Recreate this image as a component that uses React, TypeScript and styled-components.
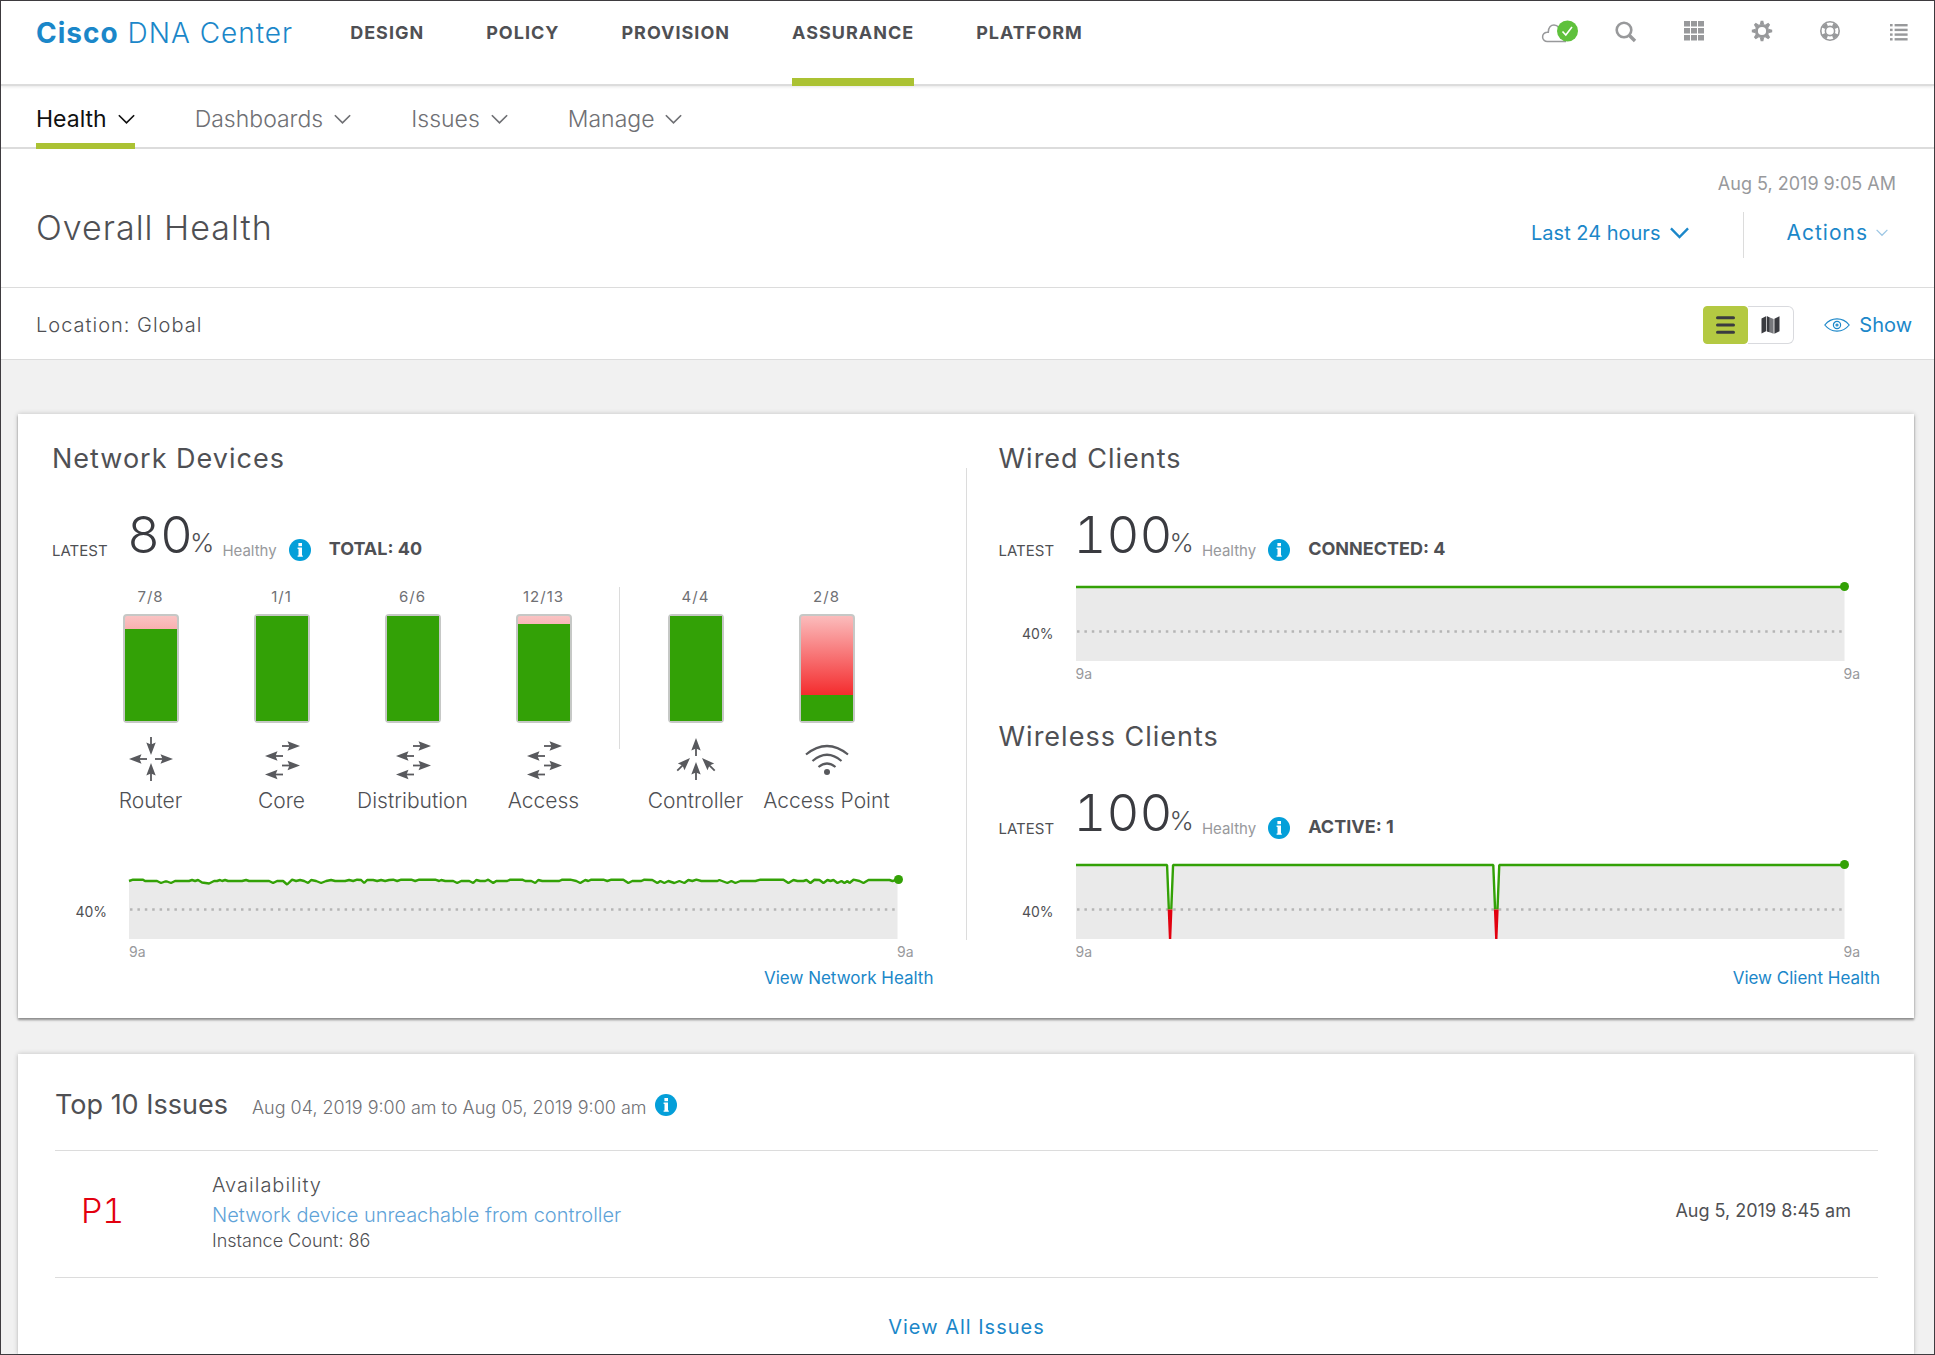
import React from 'react';
import styled, { createGlobalStyle } from 'styled-components';

const color = {
  ink: '#4f5054',
  dark: '#3a3b40',
  muted: '#6f7074',
  faint: '#98999c',
  blue: '#1b87c9',
  lightBlue: '#5fa3d8',
  info: '#049fd9',
  lime: '#abc233',
  green: '#33a106',
  red: '#e2000f',
  rule: '#dcdcdc',
  page: '#f1f1f1',
};

const GlobalStyle = createGlobalStyle`
  *, *::before, *::after { box-sizing: border-box; }
  body {
    margin: 0;
    font-family: Inter, "Liberation Sans", sans-serif;
    color: ${color.ink};
    background: ${color.page};
  }
  h1, h2, p, ul { margin: 0; padding: 0; font-weight: 400; }
  ul { list-style: none; }
  a { text-decoration: none; color: inherit; }
  button { border: 0; padding: 0; background: none; font: inherit; color: inherit; cursor: pointer; }
  svg { display: block; overflow: visible; flex: none; }
`;

/* ---------- page frame ---------- */

const Page = styled.div`
  display: flex;
  flex-direction: column;
  min-height: 100vh;
  border: 1px solid #3f3c40;
`;

const Header = styled.header`
  display: flex;
  align-items: stretch;
  height: 85px;
  padding: 0 26px 0 35px;
  background: #fff;
  border-bottom: 2px solid ${color.rule};
  box-shadow: 0 1px 3px rgba(0, 0, 0, 0.1);
  position: relative;
`;

const Brand = styled.a`
  margin-right: 57px;
  padding-top: 16px;
  font-size: 28px;
  line-height: 32px;
  font-weight: 300;
  letter-spacing: 1px;
  white-space: nowrap;
  color: ${color.blue};
  strong { font-weight: 700; }
`;

const MainNav = styled.nav`
  display: flex;
  gap: 62px;
  margin-bottom: -2px;
`;

const MainNavLink = styled.a<{ $active?: boolean }>`
  padding-top: 20px;
  font-size: 18px;
  line-height: 24px;
  font-weight: 700;
  letter-spacing: 1px;
  border-bottom: 8px solid ${(p) => (p.$active ? color.lime : 'transparent')};
`;

const Tools = styled.div`
  display: flex;
  gap: 48px;
  margin-left: auto;
  padding-top: 18px;
`;

const ToolButton = styled.button`
  display: flex;
  align-items: center;
  justify-content: center;
  height: 24px;
  color: #98999b;
`;

const SubNav = styled.nav`
  display: flex;
  gap: 60px;
  height: 63px;
  padding: 0 35px;
  background: #fff;
  border-bottom: 2px solid ${color.rule};
`;

const SubNavButton = styled.button<{ $active?: boolean }>`
  display: flex;
  align-items: center;
  gap: 11px;
  height: 63px;
  padding-top: 9px;
  font-size: 23px;
  line-height: 28px;
  font-weight: ${(p) => (p.$active ? 400 : 300)};
  color: ${(p) => (p.$active ? '#111' : color.muted)};
  border-bottom: 6px solid ${(p) => (p.$active ? color.lime : 'transparent')};
`;

const TitleBar = styled.section`
  display: flex;
  justify-content: space-between;
  padding: 23px 38px 29px 35px;
  background: #fff;
  border-bottom: 1px solid ${color.rule};
`;

const PageTitle = styled.h1`
  padding-top: 36px;
  font-size: 34px;
  line-height: 40px;
  font-weight: 300;
  letter-spacing: 1px;
`;

const TitleSide = styled.div`
  display: flex;
  flex-direction: column;
  align-items: flex-end;
  gap: 16px;
`;

const Stamp = styled.time`
  font-size: 18px;
  line-height: 24px;
  color: ${color.faint};
`;

const TitleActions = styled.div`
  display: flex;
  align-items: stretch;
  height: 46px;
  padding-right: 8px;
`;

const BlueButton = styled.button<{ $gap: number }>`
  display: flex;
  align-items: center;
  gap: ${(p) => p.$gap}px;
  font-size: 20px;
  line-height: 24px;
  color: ${color.blue};
`;

const RangeButton = styled(BlueButton)`
  padding-bottom: 4px;
`;

const ActionsButton = styled(BlueButton)`
  margin-left: 54px;
  padding: 0 0 4px 42px;
  font-size: 21px;
  letter-spacing: 1px;
  border-left: 1px solid ${color.rule};
`;

const LocationBar = styled.section`
  display: flex;
  align-items: center;
  height: 72px;
  padding: 2px 22px 0 35px;
  background: #fff;
  border-bottom: 1px solid ${color.rule};
`;

const LocationText = styled.p`
  margin-right: auto;
  font-size: 20px;
  line-height: 24px;
  font-weight: 300;
  letter-spacing: 1px;
`;

const Toggle = styled.div`
  display: flex;
  margin-right: 30px;
  border-radius: 4px;
`;

const ToggleButton = styled.button<{ $on?: boolean }>`
  display: flex;
  align-items: center;
  justify-content: center;
  width: ${(p) => (p.$on ? 45 : 46)}px;
  height: 38px;
  border: 1px solid ${(p) => (p.$on ? '#b4c942' : '#d9dade')};
  border-left-width: ${(p) => (p.$on ? 1 : 0)}px;
  border-radius: ${(p) => (p.$on ? '4px' : '0 6px 6px 0')};
  background: ${(p) => (p.$on ? '#b4c942' : '#fff')};
`;

/* ---------- cards ---------- */

const Main = styled.main`
  display: flex;
  flex-direction: column;
  gap: 36px;
  flex: 1;
  padding: 54px 20px 0 17px;
`;

const Card = styled.section<{ $fill?: boolean }>`
  flex: ${(p) => (p.$fill ? '1 0 auto' : 'none')};
  background: #fff;
  box-shadow: 0 2px 2px rgba(0, 0, 0, ${(p) => (p.$fill ? 0.1 : 0.36)}), 0 0 5px rgba(0, 0, 0, 0.2);
`;

const Columns = styled.div`
  display: grid;
  grid-template-columns: 1fr 1px 1fr;
  padding: 28px 0;
`;

const ColumnRule = styled.div`
  margin: 26px 0 50px;
  background: ${color.rule};
`;

const Column = styled.div`
  display: flex;
  flex-direction: column;
  gap: 36px;
  padding: 0 34px 0 32px;

  &:first-child {
    padding: 0 32px 0 34px;
  }
`;

const Panel = styled.section`
  display: flex;
  flex-direction: column;
`;

const PanelTitle = styled.h2`
  font-size: 27px;
  line-height: 34px;
  letter-spacing: 1px;
`;

const Score = styled.div`
  display: flex;
  align-items: flex-end;
  height: 56px;
  margin-top: 31px;
`;

const Latest = styled.span`
  width: 75px;
  font-size: 15px;
  line-height: 24px;
`;

const Percent = styled.span`
  font-size: 51px;
  line-height: 56px;
  font-weight: 300;
  font-variant-numeric: tabular-nums;
  color: ${color.dark};
`;

const PercentSign = styled.span`
  margin-left: -3px;
  font-size: 26px;
  line-height: 40px;
  font-weight: 300;
`;

const Healthy = styled.span`
  margin: 0 12px 0 8px;
  font-size: 15px;
  line-height: 24px;
  color: ${color.faint};
`;

const ScoreInfo = styled.button`
  margin: 0 18px 2px 0;
`;

const Total = styled.strong`
  font-size: 18px;
  line-height: 28px;
  font-weight: 700;
`;

const Devices = styled.div`
  display: flex;
  align-items: flex-start;
  margin: 24px 0 28px 33px;
`;

const Device = styled.div`
  display: flex;
  flex-direction: column;
  align-items: center;
  width: 131px;
`;

const DeviceRule = styled.div`
  width: 1px;
  height: 162px;
  margin: 0 10px;
  background: ${color.rule};
`;

const DeviceCount = styled.span`
  font-size: 15px;
  line-height: 20px;
  letter-spacing: 1px;
  color: ${color.muted};
`;

const Gauge = styled.div`
  display: flex;
  flex-direction: column;
  justify-content: flex-end;
  width: 56px;
  height: 109px;
  margin: 7px 0 14px;
  border: 2px solid #c6c8c6;
  border-radius: 4px;
  background: linear-gradient(#fac3c3, #f9a5a5 20px);
`;

const DeepGauge = styled(Gauge)`
  background: linear-gradient(#fbbcbc, #f42a2c 80px);
`;

const GaugeFill = styled.div`
  background: ${color.green};
`;

const DeviceName = styled.span`
  margin-top: 8px;
  font-size: 21px;
  line-height: 24px;
  font-weight: 300;
  white-space: nowrap;
`;

const ChartGrid = styled.div`
  display: grid;
  grid-template-columns: 77px 1fr;
  margin-top: 24px;
  padding-right: 36px;
`;

const AxisMark = styled.span`
  padding: 37px 22px 0 0;
  text-align: right;
  font-size: 14px;
  line-height: 20px;
`;

const Plot = styled.div`
  position: relative;
  height: 74px;
`;

const EndDot = styled.span`
  position: absolute;
  right: -5px;
  width: 9px;
  height: 9px;
  margin-top: -5px;
  border-radius: 50%;
  background: ${color.green};
`;

const AxisHours = styled.div`
  grid-column: 2;
  display: flex;
  justify-content: space-between;
  margin: 3px -16px 0 0;
  font-size: 14px;
  line-height: 20px;
  color: ${color.faint};
`;

const PanelLink = styled.a`
  align-self: flex-end;
  margin-top: 4px;
  font-size: 17px;
  line-height: 24px;
  color: ${color.blue};
`;

/* ---------- issues ---------- */

const IssuesCard = styled(Card)`
  display: flex;
  flex-direction: column;
  padding: 35px 36px 14px 37px;
`;

const IssuesHead = styled.div`
  display: flex;
  align-items: baseline;
  padding-bottom: 29px;
`;

const IssuesTitle = styled.h2`
  margin-right: 24px;
  font-size: 27px;
  line-height: 32px;
`;

const IssuesRange = styled.p`
  margin-right: 8px;
  font-size: 18px;
  line-height: 24px;
  font-weight: 300;
  color: ${color.muted};
`;

const InfoButton = styled.button`
  align-self: center;
`;

const IssueRow = styled.li`
  display: flex;
  align-items: center;
  padding: 20px 27px 26px 26px;
  border: solid ${color.rule};
  border-width: 1px 0;
`;

const Priority = styled.span`
  width: 131px;
  font-size: 34px;
  line-height: 40px;
  font-weight: 300;
  font-variant-numeric: tabular-nums;
  color: ${color.red};
`;

const IssueBody = styled.div`
  display: flex;
  flex-direction: column;
  flex: 1;
`;

const IssueKind = styled.p`
  font-size: 20px;
  line-height: 28px;
  font-weight: 300;
  letter-spacing: 1px;
`;

const IssueLink = styled.a`
  font-size: 20px;
  line-height: 32px;
  font-weight: 300;
  color: ${color.lightBlue};
`;

const IssueCount = styled.p`
  font-size: 18px;
  line-height: 20px;
  font-weight: 300;
`;

const IssueTime = styled.time`
  font-size: 18px;
  line-height: 24px;
`;

const ViewAll = styled.a`
  align-self: center;
  margin-top: 37px;
  font-size: 20px;
  line-height: 24px;
  letter-spacing: 1px;
  color: ${color.blue};
`;

/* ---------- icons ---------- */

const Chevron = ({ w = 17, stroke = 2, tint = 'currentColor' }: { w?: number; stroke?: number; tint?: string }) => (
  <svg width={w} height={w * 0.6} viewBox="0 0 20 12" aria-hidden="true">
    <path d="M1 1.5 10 10.5 19 1.5" fill="none" stroke={tint} strokeWidth={stroke} />
  </svg>
);

const InfoIcon = () => (
  <svg width="22" height="22" viewBox="0 0 22 22" aria-hidden="true">
    <circle cx="11" cy="11" r="11" fill={color.info} />
    <rect x="9.4" y="4" width="3.6" height="3.2" fill="#fff" />
    <path d="M8.600 8.600H13v7.800h.8v1.400H8.600v-1.400h.9v-6.400h-.9z" fill="#fff" />
  </svg>
);

/* The badge hangs past the cloud's own box, so it takes no room in the toolbar. */
const CloudIcon = () => (
  <svg width="25" height="24" viewBox="0 0 25 24" aria-hidden="true">
    <path
      d="M24 22.500H5.500a4.600 4.600 0 0 1-.6-9.200 7 7 0 0 1 1.400-.1C6.200 8 9 6 12 6c2 0 3.500.8 4.700 2.400"
      fill="none"
      stroke="#98999b"
      strokeWidth="1.500"
    />
    <circle cx="25.500" cy="12" r="10.500" fill="#5fc13c" />
    <path d="m20.500 12.500 3.300 3.500 6.200-8" fill="none" stroke="#fff" strokeWidth="1.600" />
  </svg>
);

const SearchIcon = () => (
  <svg width="21" height="21" viewBox="0 0 21 21" aria-hidden="true">
    <circle cx="9" cy="9" r="7.300" fill="none" stroke="currentColor" strokeWidth="2.600" />
    <path d="m14.200 14.200 5.800 5.800" stroke="currentColor" strokeWidth="3.400" />
  </svg>
);

const GridIcon = () => (
  <svg width="20" height="20" viewBox="0 0 20 20" fill="currentColor" aria-hidden="true">
    {[0, 7, 14].map((y) => [0, 7, 14].map((x) => <rect key={`${x}-${y}`} x={x} y={y} width="6" height="5.500" />))}
  </svg>
);

const GearIcon = () => (
  <svg width="20" height="20" viewBox="-10 -10 20 20" aria-hidden="true">
    <circle r="5.600" fill="none" stroke="currentColor" strokeWidth="3" />
    {[0, 45, 90, 135, 180, 225, 270, 315].map((a) => (
      <path key={a} d="M-2.200-6.500-1.300-10.200H1.300L2.200-6.500z" fill="currentColor" transform={`rotate(${a})`} />
    ))}
  </svg>
);

const LifeRingIcon = () => (
  <svg width="20" height="20" viewBox="-10 -10 20 20" fill="none" stroke="currentColor" aria-hidden="true">
    <circle r="9.200" strokeWidth="1.600" />
    <circle r="4.600" strokeWidth="1.600" />
    {[45, 135, 225, 315].map((a) => (
      <path key={a} d="M-2.600-6.400A6.900 6.900 0 0 1 2.600-6.400" strokeWidth="3.800" transform={`rotate(${a})`} />
    ))}
  </svg>
);

const ListIcon = () => (
  <svg width="20" height="17" viewBox="-2 -1 20 17" fill="currentColor" aria-hidden="true">
    {[0, 4.7, 9.4, 14.1].map((y) => (
      <g key={y}>
        <rect x="0" y={y} width="2.600" height="2.400" />
        <rect x="4.600" y={y} width="13" height="2.400" />
      </g>
    ))}
  </svg>
);

const MenuIcon = () => (
  <svg width="19" height="18" viewBox="0 0 19 18" aria-hidden="true">
    <path d="M1.500 1.700h16M1.500 9h16M1.500 16.300h16" stroke={color.dark} strokeWidth="3" strokeLinecap="round" />
  </svg>
);

const MapIcon = () => (
  <svg width="19" height="18" viewBox="0 0 19 18" aria-hidden="true">
    <path d="M.5 2.500 5 .3v15L.5 17.500z" fill={color.dark} />
    <path d="M5.800.3 12.600 3v14.700L5.800 15.300z" fill="#77787c" />
    <path d="M5.800.3 8.300 1.300v14.900L5.800 15.300zM13.400 2.800 18.500.3v14.900l-5.100 2.500z" fill={color.dark} />
  </svg>
);

const EyeIcon = () => (
  <svg width="26" height="14" viewBox="0 0 26 14" fill="none" stroke={color.blue} strokeWidth="1.200" aria-hidden="true">
    <path d="M.8 7C4 3 8.300.9 13 .9S22 3 25.200 7C22 11 17.700 13.100 13 13.100S4 11 .8 7z" />
    <circle cx="13" cy="7" r="3.600" />
    <circle cx="13" cy="7" r="1" />
  </svg>
);

/* An 18px arrow whose tip sits at (x, y), pointing right before rotation. */
const Arrow = ({ x, y, turn = 0 }: { x: number; y: number; turn?: number }) => (
  <g transform={`translate(${x} ${y}) rotate(${turn})`}>
    <path d="M-18 0H-9" stroke="#58595d" strokeWidth="1.800" />
    <path d="M0 0-12.500-4.700-10.500 0-12.500 4.700z" fill="#58595d" />
  </g>
);

type DeviceKind = 'router' | 'switch' | 'controller' | 'wifi';

const DeviceIcon = ({ kind }: { kind: DeviceKind }) => (
  <svg width="44" height="44" viewBox="-22 -22 44 44" aria-hidden="true">
    {kind === 'router' && (
      <>
        <Arrow x={-22} y={0} turn={180} />
        <Arrow x={22} y={0} />
        <Arrow x={0} y={-4} turn={90} />
        <Arrow x={0} y={4} turn={-90} />
      </>
    )}
    {kind === 'switch' && (
      <>
        <Arrow x={18} y={-13} />
        <Arrow x={-17} y={-3} turn={180} />
        <Arrow x={18} y={6.5} />
        <Arrow x={-17} y={15.5} turn={180} />
      </>
    )}
    {kind === 'controller' && (
      <>
        <Arrow x={0} y={-21} turn={-90} />
        <Arrow x={0} y={3} turn={-90} />
        <Arrow x={-6} y={-1} turn={-45} />
        <Arrow x={6} y={-1} turn={-135} />
      </>
    )}
    {kind === 'wifi' && (
      <g fill="none" stroke="#58595d" strokeWidth="2.200">
        <path d="M-21-4.500Q0-21.500 21-4.500" />
        <path d="M-14.500 2Q0-10.500 14.500 2" />
        <path d="M-8.500 8Q0 1 8.500 8" />
        <circle cy="13" r="3" fill="#58595d" stroke="none" />
      </g>
    )}
  </svg>
);

/* ---------- trend charts ---------- */

const PLOT_W = 768;
const PLOT_H = 74;

type Point = [number, number];

/* Network health over the day; y is measured down from 100%. */
const networkTrend: Point[] = [
  [0, 16], [4, 14.7], [14, 14.7], [16, 16], [28, 16], [32, 18], [36, 16.500], [38, 16.500], [42, 18], [46, 16],
  [60, 16], [63, 15], [66, 16], [69, 15], [73, 17.500], [80, 18.500], [85, 16], [88, 16], [91, 15], [93, 16],
  [96, 15], [99, 16], [113, 16], [117, 15], [120, 16], [140, 16], [144, 18], [148, 16], [154, 16], [158, 19.500],
  [163, 14.700], [167, 16], [171, 15], [175, 16], [179, 18], [182, 15], [187, 16], [192, 18], [197, 16], [202, 15],
  [206, 16], [216, 16], [220, 15], [224, 16], [228, 14.700], [232, 15], [235, 18], [238, 15], [244, 15], [248, 16],
  [252, 15], [256, 16], [260, 15], [264, 14.700], [268, 16], [272, 14.700], [282, 14.700], [286, 16], [290, 14.700],
  [306, 14.700], [310, 16], [312, 15], [316, 16], [324, 16], [328, 18], [332, 16], [340, 16], [344, 18], [347, 15],
  [351, 16], [356, 16], [359, 14.700], [364, 18], [367, 16], [378, 16], [381, 14.700], [393, 14.700], [396, 16],
  [402, 16], [406, 18], [409, 15], [413, 16], [430, 16], [433, 14.700], [441, 14.700], [447, 16], [451, 18],
  [456, 15], [459, 16], [462, 14.700], [474, 14.700], [478, 16], [482, 14.700], [494, 14.700], [499, 18], [503, 16],
  [512, 16], [515, 14.700], [523, 15], [528, 18], [531, 16], [535, 18], [539, 16], [545, 18], [550, 16], [555, 18],
  [559, 15], [563, 16], [567, 14.700], [572, 16], [588, 16], [590, 15], [598, 18], [602, 16], [606, 18], [611, 16],
  [626, 16], [631, 14.700], [654, 14.700], [659, 18], [664, 15], [668, 16], [674, 16], [677, 15], [681, 18],
  [685, 14.700], [690, 15], [694, 18], [698, 15], [701, 16], [704, 15], [708, 18], [712, 16], [715, 18], [718, 16],
  [720, 18], [724, 14.700], [730, 16], [734, 18], [739, 15], [744, 15], [760, 15], [763, 16], [768, 14.700],
];

const wiredTrend: Point[] = [[0, 0], [768, 0]];

const wirelessTrend: Point[] = [
  [0, 0], [91, 0], [94, 74], [97, 0], [417, 0], [420, 74], [423, 0], [768, 0],
];

const toPath = (points: Point[]) => points.map(([x, y], i) => `${i ? 'L' : 'M'}${x} ${y}`).join('');

const TrendChart = ({ id, points }: { id: string; points: Point[] }) => {
  const line = toPath(points);
  const threshold = PLOT_H * 0.6;
  return (
    <ChartGrid>
      <AxisMark>40%</AxisMark>
      <Plot>
        <svg width="100%" height={PLOT_H} viewBox={`0 0 ${PLOT_W} ${PLOT_H}`} preserveAspectRatio="none" role="img" aria-label={id}>
          <clipPath id={`${id}-good`}>
            <rect x="-2" y="-4" width={PLOT_W + 4} height={threshold + 4} />
          </clipPath>
          <clipPath id={`${id}-poor`}>
            <rect x="-2" y={threshold} width={PLOT_W + 4} height={PLOT_H - threshold} />
          </clipPath>
          <path d={`${line}V${PLOT_H}H0Z`} fill="#eaeaea" />
          <path
            d={`M1 ${threshold}H${PLOT_W}`}
            stroke="#b5b5b5"
            strokeWidth="2.500"
            strokeDasharray="2.500 4.900"
            vectorEffect="non-scaling-stroke"
          />
          <g fill="none" strokeWidth="2.400" strokeLinejoin="bevel">
            <path d={line} stroke={color.green} clipPath={`url(#${id}-good)`} vectorEffect="non-scaling-stroke" />
            <path d={line} stroke={color.red} clipPath={`url(#${id}-poor)`} vectorEffect="non-scaling-stroke" />
          </g>
        </svg>
        <EndDot style={{ top: Math.round(points[points.length - 1][1]) }} />
      </Plot>
      <AxisHours>
        <span>9a</span>
        <span>9a</span>
      </AxisHours>
    </ChartGrid>
  );
};

const ScoreLine = ({ value, total }: { value: number; total: string }) => (
  <Score>
    <Latest>LATEST</Latest>
    <Percent>{value}</Percent>
    <PercentSign>%</PercentSign>
    <Healthy>Healthy</Healthy>
    <ScoreInfo aria-label="About this score">
      <InfoIcon />
    </ScoreInfo>
    <Total>{total}</Total>
  </Score>
);

type DeviceData = { name: string; kind: DeviceKind; healthy: number; total: number };

const wiredDevices: DeviceData[] = [
  { name: 'Router', kind: 'router', healthy: 7, total: 8 },
  { name: 'Core', kind: 'switch', healthy: 1, total: 1 },
  { name: 'Distribution', kind: 'switch', healthy: 6, total: 6 },
  { name: 'Access', kind: 'switch', healthy: 12, total: 13 },
];

const wirelessDevices: DeviceData[] = [
  { name: 'Controller', kind: 'controller', healthy: 4, total: 4 },
  { name: 'Access Point', kind: 'wifi', healthy: 2, total: 8 },
];

const DeviceColumn = ({ name, kind, healthy, total }: DeviceData) => {
  const share = healthy / total;
  const Bar = share < 0.4 ? DeepGauge : Gauge;
  return (
    <Device>
      <DeviceCount>{`${healthy}/${total}`}</DeviceCount>
      <Bar>
        <GaugeFill style={{ height: `${share * 100}%` }} />
      </Bar>
      <DeviceIcon kind={kind} />
      <DeviceName>{name}</DeviceName>
    </Device>
  );
};

const mainSections = ['DESIGN', 'POLICY', 'PROVISION', 'ASSURANCE', 'PLATFORM'];
const subSections = ['Health', 'Dashboards', 'Issues', 'Manage'];

export default function App() {
  return (
    <Page>
      <GlobalStyle />
      <Header>
        <Brand href="#home">
          <strong>Cisco</strong> DNA Center
        </Brand>
        <MainNav>
          {mainSections.map((s) => (
            <MainNavLink key={s} href={`#${s.toLowerCase()}`} $active={s === 'ASSURANCE'}>
              {s}
            </MainNavLink>
          ))}
        </MainNav>
        <Tools>
          <ToolButton aria-label="Cloud status"><CloudIcon /></ToolButton>
          <ToolButton aria-label="Search"><SearchIcon /></ToolButton>
          <ToolButton aria-label="Applications"><GridIcon /></ToolButton>
          <ToolButton aria-label="Settings"><GearIcon /></ToolButton>
          <ToolButton aria-label="Help"><LifeRingIcon /></ToolButton>
          <ToolButton aria-label="Notifications"><ListIcon /></ToolButton>
        </Tools>
      </Header>

      <SubNav>
        {subSections.map((s) => (
          <SubNavButton key={s} $active={s === 'Health'}>
            {s}
            <Chevron />
          </SubNavButton>
        ))}
      </SubNav>

      <TitleBar>
        <PageTitle>Overall Health</PageTitle>
        <TitleSide>
          <Stamp>Aug 5, 2019 9:05 AM</Stamp>
          <TitleActions>
            <RangeButton $gap={10}>
              Last 24 hours
              <Chevron w={19} stroke={2.5} />
            </RangeButton>
            <ActionsButton $gap={8}>
              Actions
              <Chevron w={12} tint="#9cc6e4" />
            </ActionsButton>
          </TitleActions>
        </TitleSide>
      </TitleBar>

      <LocationBar>
        <LocationText>Location: Global</LocationText>
        <Toggle>
          <ToggleButton $on aria-label="List view" aria-pressed="true"><MenuIcon /></ToggleButton>
          <ToggleButton aria-label="Map view" aria-pressed="false"><MapIcon /></ToggleButton>
        </Toggle>
        <BlueButton $gap={9}>
          <EyeIcon />
          Show
        </BlueButton>
      </LocationBar>

      <Main>
        <Card>
          <Columns>
            <Column>
              <Panel>
                <PanelTitle>Network Devices</PanelTitle>
                <ScoreLine value={80} total="TOTAL: 40" />
                <Devices>
                  {wiredDevices.map((d) => <DeviceColumn key={d.name} {...d} />)}
                  <DeviceRule />
                  {wirelessDevices.map((d) => <DeviceColumn key={d.name} {...d} />)}
                </Devices>
                <TrendChart id="network" points={networkTrend} />
                <PanelLink href="#network-health">View Network Health</PanelLink>
              </Panel>
            </Column>
            <ColumnRule />
            <Column>
              <Panel>
                <PanelTitle>Wired Clients</PanelTitle>
                <ScoreLine value={100} total="CONNECTED: 4" />
                <TrendChart id="wired" points={wiredTrend} />
              </Panel>
              <Panel>
                <PanelTitle>Wireless Clients</PanelTitle>
                <ScoreLine value={100} total="ACTIVE: 1" />
                <TrendChart id="wireless" points={wirelessTrend} />
                <PanelLink href="#client-health">View Client Health</PanelLink>
              </Panel>
            </Column>
          </Columns>
        </Card>

        <IssuesCard $fill>
          <IssuesHead>
            <IssuesTitle>Top 10 Issues</IssuesTitle>
            <IssuesRange>Aug 04, 2019 9:00 am to Aug 05, 2019 9:00 am</IssuesRange>
            <InfoButton aria-label="About issues"><InfoIcon /></InfoButton>
          </IssuesHead>
          <ul>
            <IssueRow>
              <Priority>P1</Priority>
              <IssueBody>
                <IssueKind>Availability</IssueKind>
                <IssueLink href="#issue">Network device unreachable from controller</IssueLink>
                <IssueCount>Instance Count: 86</IssueCount>
              </IssueBody>
              <IssueTime>Aug 5, 2019 8:45 am</IssueTime>
            </IssueRow>
          </ul>
          <ViewAll href="#issues">View All Issues</ViewAll>
        </IssuesCard>
      </Main>
    </Page>
  );
}
